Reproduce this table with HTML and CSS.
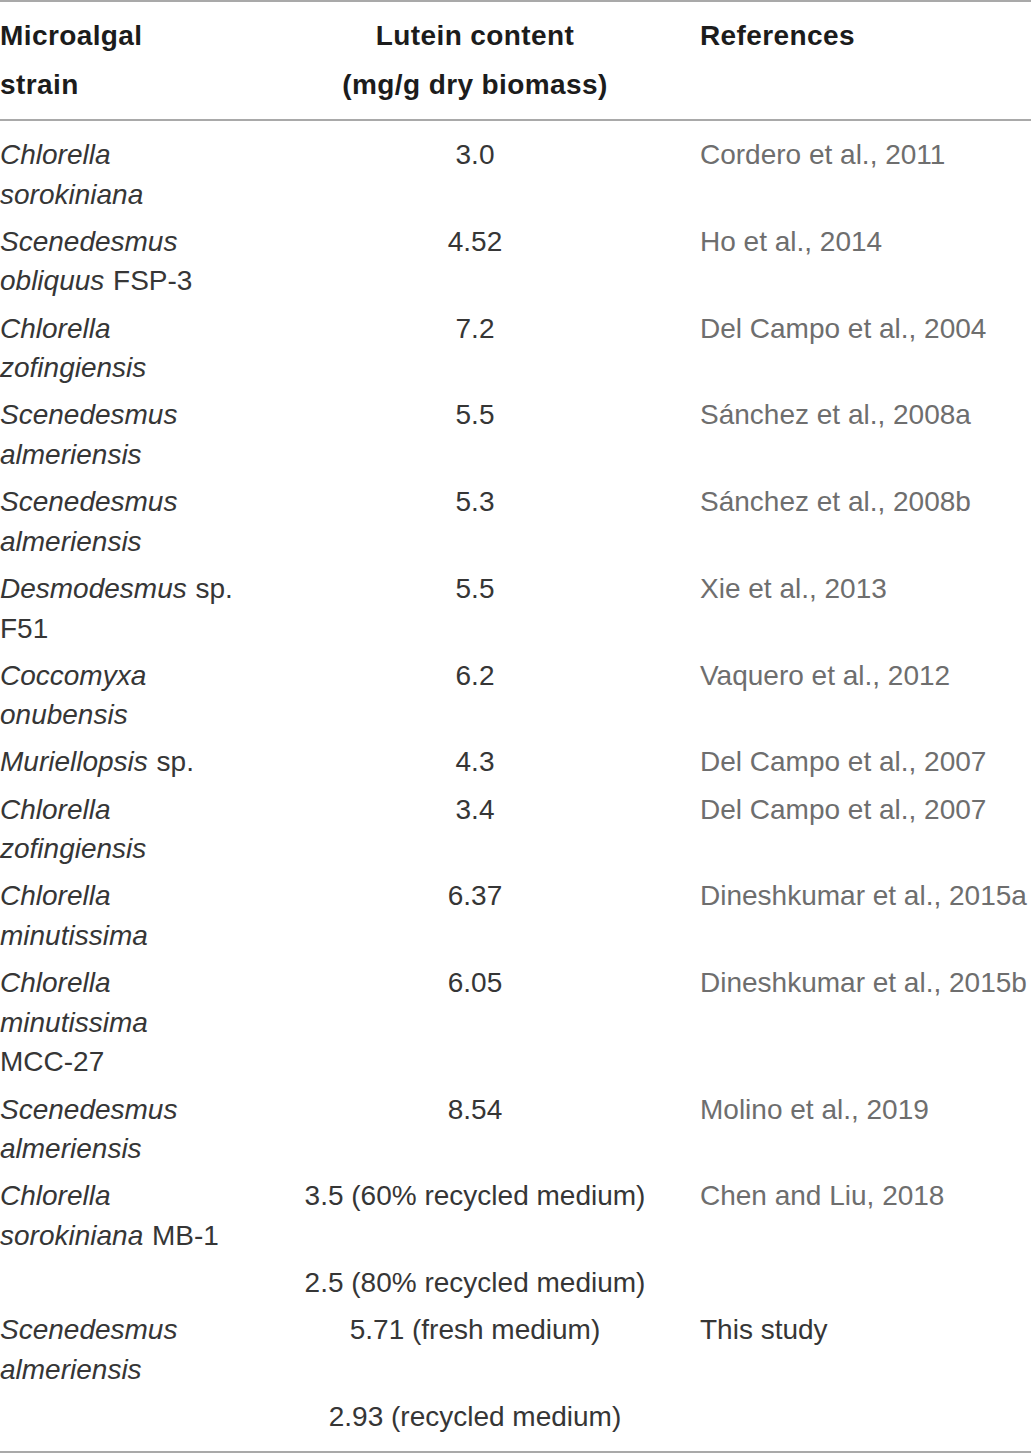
FILE: index.html
```html
<!DOCTYPE html>
<html lang="en">
<head>
<meta charset="utf-8">
<title>Lutein content of microalgal strains</title>
<link rel="stylesheet" href="styles.css">
</head>
<body>
<table class="lutein">
  <colgroup>
    <col class="c-strain">
    <col class="c-content">
    <col class="c-ref">
  </colgroup>
  <thead>
    <tr>
      <th class="strain">Microalgal<br>strain</th>
      <th class="content">Lutein content<br>(mg/g dry biomass)</th>
      <th class="ref">References</th>
    </tr>
  </thead>
  <tbody>
    <tr><td class="strain"><i>Chlorella sorokiniana</i></td><td class="content">3.0</td><td class="ref">Cordero et al., 2011</td></tr>
    <tr><td class="strain"><i>Scenedesmus</i><br><i>obliquus</i> FSP-3</td><td class="content">4.52</td><td class="ref">Ho et al., 2014</td></tr>
    <tr><td class="strain"><i>Chlorella zofingiensis</i></td><td class="content">7.2</td><td class="ref">Del Campo et al., 2004</td></tr>
    <tr><td class="strain"><i>Scenedesmus almeriensis</i></td><td class="content">5.5</td><td class="ref">Sánchez et al., 2008a</td></tr>
    <tr><td class="strain"><i>Scenedesmus almeriensis</i></td><td class="content">5.3</td><td class="ref">Sánchez et al., 2008b</td></tr>
    <tr><td class="strain"><i>Desmodesmus</i> sp.<br>F51</td><td class="content">5.5</td><td class="ref">Xie et al., 2013</td></tr>
    <tr><td class="strain"><i>Coccomyxa onubensis</i></td><td class="content">6.2</td><td class="ref">Vaquero et al., 2012</td></tr>
    <tr><td class="strain"><i>Muriellopsis</i> sp.</td><td class="content">4.3</td><td class="ref">Del Campo et al., 2007</td></tr>
    <tr><td class="strain"><i>Chlorella zofingiensis</i></td><td class="content">3.4</td><td class="ref">Del Campo et al., 2007</td></tr>
    <tr><td class="strain"><i>Chlorella minutissima</i></td><td class="content">6.37</td><td class="ref">Dineshkumar et al., 2015a</td></tr>
    <tr><td class="strain"><i>Chlorella minutissima</i><br>MCC-27</td><td class="content">6.05</td><td class="ref">Dineshkumar et al., 2015b</td></tr>
    <tr><td class="strain"><i>Scenedesmus almeriensis</i></td><td class="content">8.54</td><td class="ref">Molino et al., 2019</td></tr>
    <tr><td class="strain"><i>Chlorella</i><br><i>sorokiniana</i> MB-1</td><td class="content">3.5 (60% recycled medium)</td><td class="ref">Chen and Liu, 2018</td></tr>
    <tr><td class="strain"></td><td class="content">2.5 (80% recycled medium)</td><td class="ref"></td></tr>
    <tr><td class="strain"><i>Scenedesmus almeriensis</i></td><td class="content">5.71 (fresh medium)</td><td class="ref study">This study</td></tr>
    <tr><td class="strain"></td><td class="content">2.93 (recycled medium)</td><td class="ref"></td></tr>
  </tbody>
</table>
</body>
</html>
```

FILE: styles.css
```css
html, body {
  margin: 0;
  padding: 0;
  background: #ffffff;
}

body {
  font-family: "Liberation Sans", Arial, sans-serif;
  font-size: 28px;
  color: #2a2a2a;
}

.lutein {
  width: 1031px;
  border-collapse: collapse;
  table-layout: fixed;
  border-top: 2px solid #a9a9a9;
  border-bottom: 2px solid #a9a9a9;
}

.c-strain { width: 250px; }
.c-content { width: 450px; }
.c-ref { width: 331px; }

.lutein th,
.lutein td {
  vertical-align: top;
  padding: 0;
}

.lutein thead th {
  font-weight: bold;
  color: #1c1c1c;
  letter-spacing: 0.4px;
  line-height: 48.5px;
  padding-top: 10px;
  padding-bottom: 10px;
  border-bottom: 2px solid #a9a9a9;
}

.lutein tbody td {
  line-height: 39.6px;
  padding-top: 3.8px;
  padding-bottom: 3.8px;
  color: #363636;
}

.lutein tbody tr:first-child td {
  padding-top: 14px;
}

.lutein tbody tr:last-child td {
  padding-bottom: 14.5px;
}

.strain {
  text-align: left;
  padding-left: 1px;
}

.strain i {
  padding-right: 1px;
}

.content {
  text-align: center;
}

.ref {
  text-align: left;
}

.lutein tbody td.ref {
  color: #6e6e6e;
}

.lutein tbody td.ref.study {
  color: #363636;
}
```
